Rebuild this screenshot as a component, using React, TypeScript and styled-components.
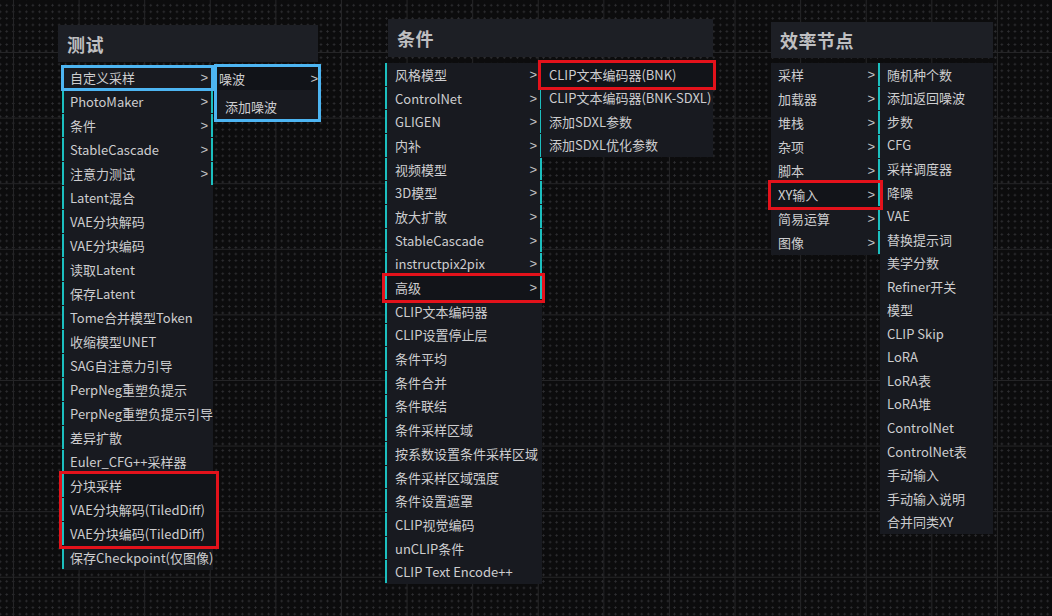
import React from 'react';
import styled, { createGlobalStyle } from 'styled-components';

type Mark = { from: number, to: number, color: string, wide?: number, inset?: number }

type MenuProps = {
    items: string[],
    subCount: number,
    bar?: boolean,
    h: number,
    width: number,
    pad?: number,
    marks?: Mark[],
}

const CYAN = '#1cbfbf';
const RED = '#e3121b';
const BLUE = '#4db5f2';

const GlobalStyle = createGlobalStyle`
    html, body {
        margin: 0;
        padding: 0;
        background: #0c0c0d;
    }
    body {
        font-family: "Noto Sans CJK SC", "Liberation Sans", sans-serif;
    }
`

const Menu: React.FC<MenuProps> = ({ items, subCount, bar, h, width, pad, marks = [] }) => {
    const out: React.ReactNode[] = [];
    let i = 0;
    const entry = (k: number) => (
        <Entry key={k} $h={h} $bar={bar} $sub={k < subCount} $pad={pad}>
            <span>{items[k]}</span>
            {k < subCount && <Arrow>&gt;</Arrow>}
        </Entry>
    );
    while (i < items.length) {
        const m = marks.find(mk => mk.from === i);
        if (m) {
            const rows = [];
            for (let k = m.from; k <= m.to; k++) rows.push(entry(k));
            out.push(
                <Marked key={'m' + i} $color={m.color} $wide={m.wide ?? 0} $inset={m.inset ?? 0}>
                    {rows}
                </Marked>
            );
            i = m.to + 1;
        } else {
            out.push(entry(i));
            i++;
        }
    }
    return <MenuBox $width={width}>{out}</MenuBox>;
}

const testItems = [
    '自定义采样', 'PhotoMaker', '条件', 'StableCascade', '注意力测试', 'Latent混合', 'VAE分块解码',
    'VAE分块编码', '读取Latent', '保存Latent', 'Tome合并模型Token', '收缩模型UNET', 'SAG自注意力引导',
    'PerpNeg重塑负提示', 'PerpNeg重塑负提示引导', '差异扩散', 'Euler_CFG++采样器', '分块采样',
    'VAE分块解码(TiledDiff)', 'VAE分块编码(TiledDiff)', '保存Checkpoint(仅图像)',
];

const condItems = [
    '风格模型', 'ControlNet', 'GLIGEN', '内补', '视频模型', '3D模型', '放大扩散', 'StableCascade',
    'instructpix2pix', '高级', 'CLIP文本编码器', 'CLIP设置停止层', '条件平均', '条件合并', '条件联结',
    '条件采样区域', '按系数设置条件采样区域', '条件采样区域强度', '条件设置遮罩', 'CLIP视觉编码',
    'unCLIP条件', 'CLIP Text Encode++',
];

const advItems = ['CLIP文本编码器(BNK)', 'CLIP文本编码器(BNK-SDXL)', '添加SDXL参数', '添加SDXL优化参数'];

const effItems = ['采样', '加载器', '堆栈', '杂项', '脚本', 'XY输入', '简易运算', '图像'];

const xyItems = [
    '随机种个数', '添加返回噪波', '步数', 'CFG', '采样调度器', '降噪', 'VAE', '替换提示词', '美学分数',
    'Refiner开关', '模型', 'CLIP Skip', 'LoRA', 'LoRA表', 'LoRA堆', 'ControlNet', 'ControlNet表',
    '手动输入', '手动输入说明', '合并同类XY',
];

const App: React.FC = () => {
    return (
        <Canvas>
            <GlobalStyle />

            <Group $x={58} $y={25}>
                <Title $width={260} $height={37}>测试</Title>
                <Body $top={4} $left={4}>
                    <Menu items={testItems} subCount={5} bar h={24} width={151} pad={6}
                        marks={[
                            { from: 0, to: 0, color: BLUE, inset: 2 },
                            { from: 17, to: 19, color: RED, wide: 3 },
                        ]} />
                    <NoiseMenu>
                        <NoiseEntry>
                            <span>噪波</span>
                            <Arrow>&gt;</Arrow>
                        </NoiseEntry>
                        <NoiseEntry $inset>添加噪波</NoiseEntry>
                    </NoiseMenu>
                </Body>
            </Group>

            <Group $x={385} $y={19}>
                <Title $width={325} $height={38} $shift={3}>条件</Title>
                <Body $top={6} $left={0}>
                    <Menu items={condItems} subCount={10} bar h={23.7} width={157} pad={8}
                        marks={[{ from: 9, to: 9, color: RED }]} />
                    <SubMenu $width={172} $shift={-1}>
                        <Menu items={advItems} subCount={0} h={23.5} width={172} pad={8}
                            marks={[{ from: 0, to: 0, color: RED }]} />
                    </SubMenu>
                </Body>
            </Group>

            <Group $x={771} $y={22}>
                <Title $width={222} $height={36}>效率节点</Title>
                <Body $top={5} $left={0}>
                    <Menu items={effItems} subCount={8} h={24} width={109} pad={7}
                        marks={[{ from: 5, to: 5, color: RED }]} />
                    <Menu items={xyItems} subCount={0} h={23.55} width={113} pad={7} />
                </Body>
            </Group>
        </Canvas>
    );
}

export default App;

const Canvas = styled.div`
    position: relative;
    width: 1052px;
    height: 616px;
    overflow: hidden;
    background-color: #0c0c0d;
    background-image:
        linear-gradient(#252527 1px, transparent 1px),
        linear-gradient(90deg, #252527 1px, transparent 1px),
        radial-gradient(circle, #2e2e31 0.9px, transparent 1.1px);
    background-size: 65.6px 65.6px, 65.6px 65.6px, 6.56px 6.56px;
    background-position: 13px 52px, 13px 52px, 10px 2px;
`

const Group = styled.div<{ $x: number, $y: number }>`
    position: absolute;
    left: ${p => p.$x}px;
    top: ${p => p.$y}px;
`

const Title = styled.div<{ $width: number, $height: number, $shift?: number }>`
    display: flex;
    align-items: center;
    box-sizing: border-box;
    width: ${p => p.$width}px;
    height: ${p => p.$height}px;
    margin-left: ${p => p.$shift ?? 0}px;
    padding-left: 9px;
    background: #1d1f25;
    color: #bfbfc1;
    font-size: 18px;
    font-weight: bold;
    letter-spacing: 0.5px;
`

const Body = styled.div<{ $top: number, $left: number }>`
    display: flex;
    align-items: flex-start;
    margin-top: ${p => p.$top}px;
    margin-left: ${p => p.$left}px;
`

const MenuBox = styled.div<{ $width: number }>`
    display: flex;
    flex-direction: column;
    width: ${p => p.$width}px;
    background: #181a20;
    font-size: 13px;
    color: #cdcdcf;
`

const Entry = styled.div<{ $h: number, $bar?: boolean, $sub?: boolean, $pad?: number }>`
    display: flex;
    align-items: center;
    justify-content: space-between;
    box-sizing: border-box;
    height: ${p => p.$h - 1}px;
    margin-bottom: 1px;
    padding: 0 ${p => p.$sub ? 3 : 0}px 0 ${p => p.$pad ?? 6}px;
    border-left: ${p => p.$bar ? `2px solid ${CYAN}` : '0'};
    border-right: ${p => p.$sub ? `2px solid ${CYAN}` : '0'};
    white-space: nowrap;
    line-height: 1;
`

const Arrow = styled.span`
    font-family: "Liberation Sans", sans-serif;
    font-size: 13px;
    color: #c4c4c6;
`

const Marked = styled.div<{ $color: string, $wide: number, $inset: number }>`
    position: relative;
    z-index: 2;
    display: flex;
    flex-direction: column;
    margin-right: ${p => -p.$wide}px;
    outline: 3px solid ${p => p.$color};
    outline-offset: ${p => -p.$inset}px;
    background: ${p => p.$color === RED ? '#121419' : 'transparent'};

    & > div {
        margin-right: ${p => p.$wide}px;
    }
`

const SubMenu = styled.div<{ $width: number, $shift: number }>`
    width: ${p => p.$width}px;
    margin-left: ${p => p.$shift}px;
    position: relative;
    z-index: 1;
`

const NoiseMenu = styled.div`
    display: flex;
    flex-direction: column;
    gap: 4px;
    box-sizing: border-box;
    width: 107px;
    margin-left: 1px;
    margin-top: -2px;
    padding: 2px 3px 4px 3px;
    background: #181a20;
    outline: 3px solid ${BLUE};
    outline-offset: -3px;
    font-size: 13px;
    color: #cdcdcf;
`

const NoiseEntry = styled.div<{ $inset?: boolean }>`
    display: flex;
    align-items: center;
    justify-content: space-between;
    height: 24px;
    padding-left: ${p => p.$inset ? 8 : 2}px;
    background: ${p => p.$inset ? '#181a20' : '#111318'};
    white-space: nowrap;
    line-height: 1;
`
